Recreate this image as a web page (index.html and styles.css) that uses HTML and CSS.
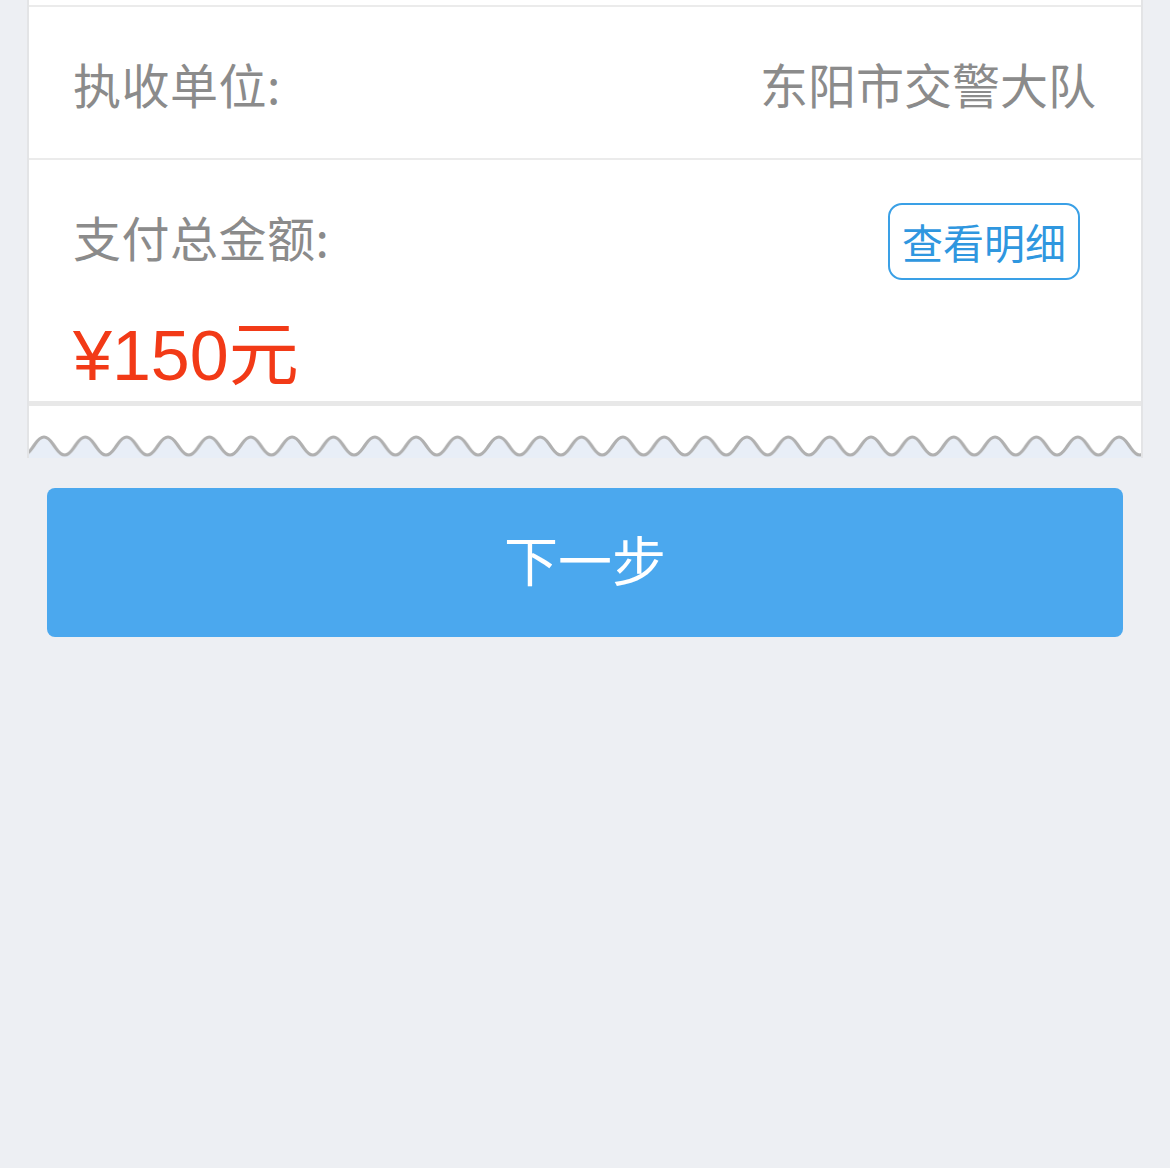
FILE: index.html
```html
<!DOCTYPE html>
<html lang="zh-CN">
<head>
<meta charset="UTF-8">
<meta name="viewport" content="width=device-width, initial-scale=1.0">
<title>支付确认</title>
<link rel="stylesheet" href="styles.css">
</head>
<body>

<div class="bill">
  <div class="row-prev"></div>
  <div class="row">
    <span class="label">执收单位:</span>
    <span class="value">东阳市交警大队</span>
  </div>
  <div class="row-total">
    <div class="total-head">
      <span class="label">支付总金额:</span>
      <a class="detail-btn" href="#">查看明细</a>
    </div>
    <div class="amount">¥150元</div>
  </div>
  <div class="wave">
    <svg width="100%" height="52" xmlns="http://www.w3.org/2000/svg">
      <defs>
        <pattern id="zig" x="15" y="0" width="41.35" height="52" patternUnits="userSpaceOnUse">
          <path d="M0,31 C5,31 8,37 10.3,40 C12.6,43 15.7,49 20.675,49 C25.6,49 28.7,43 31,40 C33.3,37 36.3,31 41.35,31 L41.35,52 L0,52 Z" fill="#e8eef7"/>
          <path d="M0,31 C5,31 8,37 10.3,40 C12.6,43 15.7,49 20.675,49 C25.6,49 28.7,43 31,40 C33.3,37 36.3,31 41.35,31" fill="none" stroke="#b0b0b0" stroke-width="3.2"/>
        </pattern>
      </defs>
      <rect width="100%" height="52" fill="url(#zig)"/>
    </svg>
  </div>
</div>

<div class="actions">
  <button class="next-btn" type="button">下一步</button>
</div>

</body>
</html>
```

FILE: styles.css
```css
body {
  margin: 0;
  background-color: #edeff3;
  font-family: "Noto Sans CJK SC", sans-serif;
}
.bill {
  margin: 0 27px;
  background-color: white;
  border-left: 2px solid #e3e4e6;
  border-right: 2px solid #e3e4e6;
}
.row-prev {
  height: 5px;
  border-bottom: 2px solid #ebebeb;
}
.row {
  height: 151px;
  border-bottom: 2px solid #ebebeb;
  display: flex;
  justify-content: space-between;
  align-items: center;
  padding: 0 45px 0 44px;
}
.label,
.value {
  font-size: 48px;
  color: #8b8b8b;
}
.label {
  letter-spacing: 0.5px;
}
.row-total {
  height: 246px;
  box-sizing: border-box;
  padding: 43px 45px 0 44px;
  border-bottom: 5px solid #e8e8e8;
}
.total-head {
  display: flex;
  justify-content: space-between;
  align-items: center;
  height: 77px;
}
.total-head .label {
  line-height: 60px;
  margin-bottom: 12px;
}
.detail-btn {
  margin-right: 16px;
  padding: 0 12px;
  line-height: 73px;
  font-size: 41px;
  color: #2f97df;
  text-decoration: none;
  border: 2px solid #3aa0e6;
  border-radius: 14px;
}
.amount {
  margin-top: 41px;
  height: 70px;
  line-height: 70px;
  font-family: "Liberation Sans", "Noto Sans CJK SC", sans-serif;
  font-size: 70px;
  color: #f23a17;
}
.wave {
  height: 52px;
}
.wave svg {
  display: block;
}
.actions {
  padding: 30px 47px 0;
}
.next-btn {
  display: block;
  width: 100%;
  height: 149px;
  padding-bottom: 10px;
  border: none;
  border-radius: 8px;
  background-color: #4ba8ee;
  color: white;
  font-family: "Noto Sans CJK SC", sans-serif;
  font-size: 54px;
  cursor: pointer;
}
```
